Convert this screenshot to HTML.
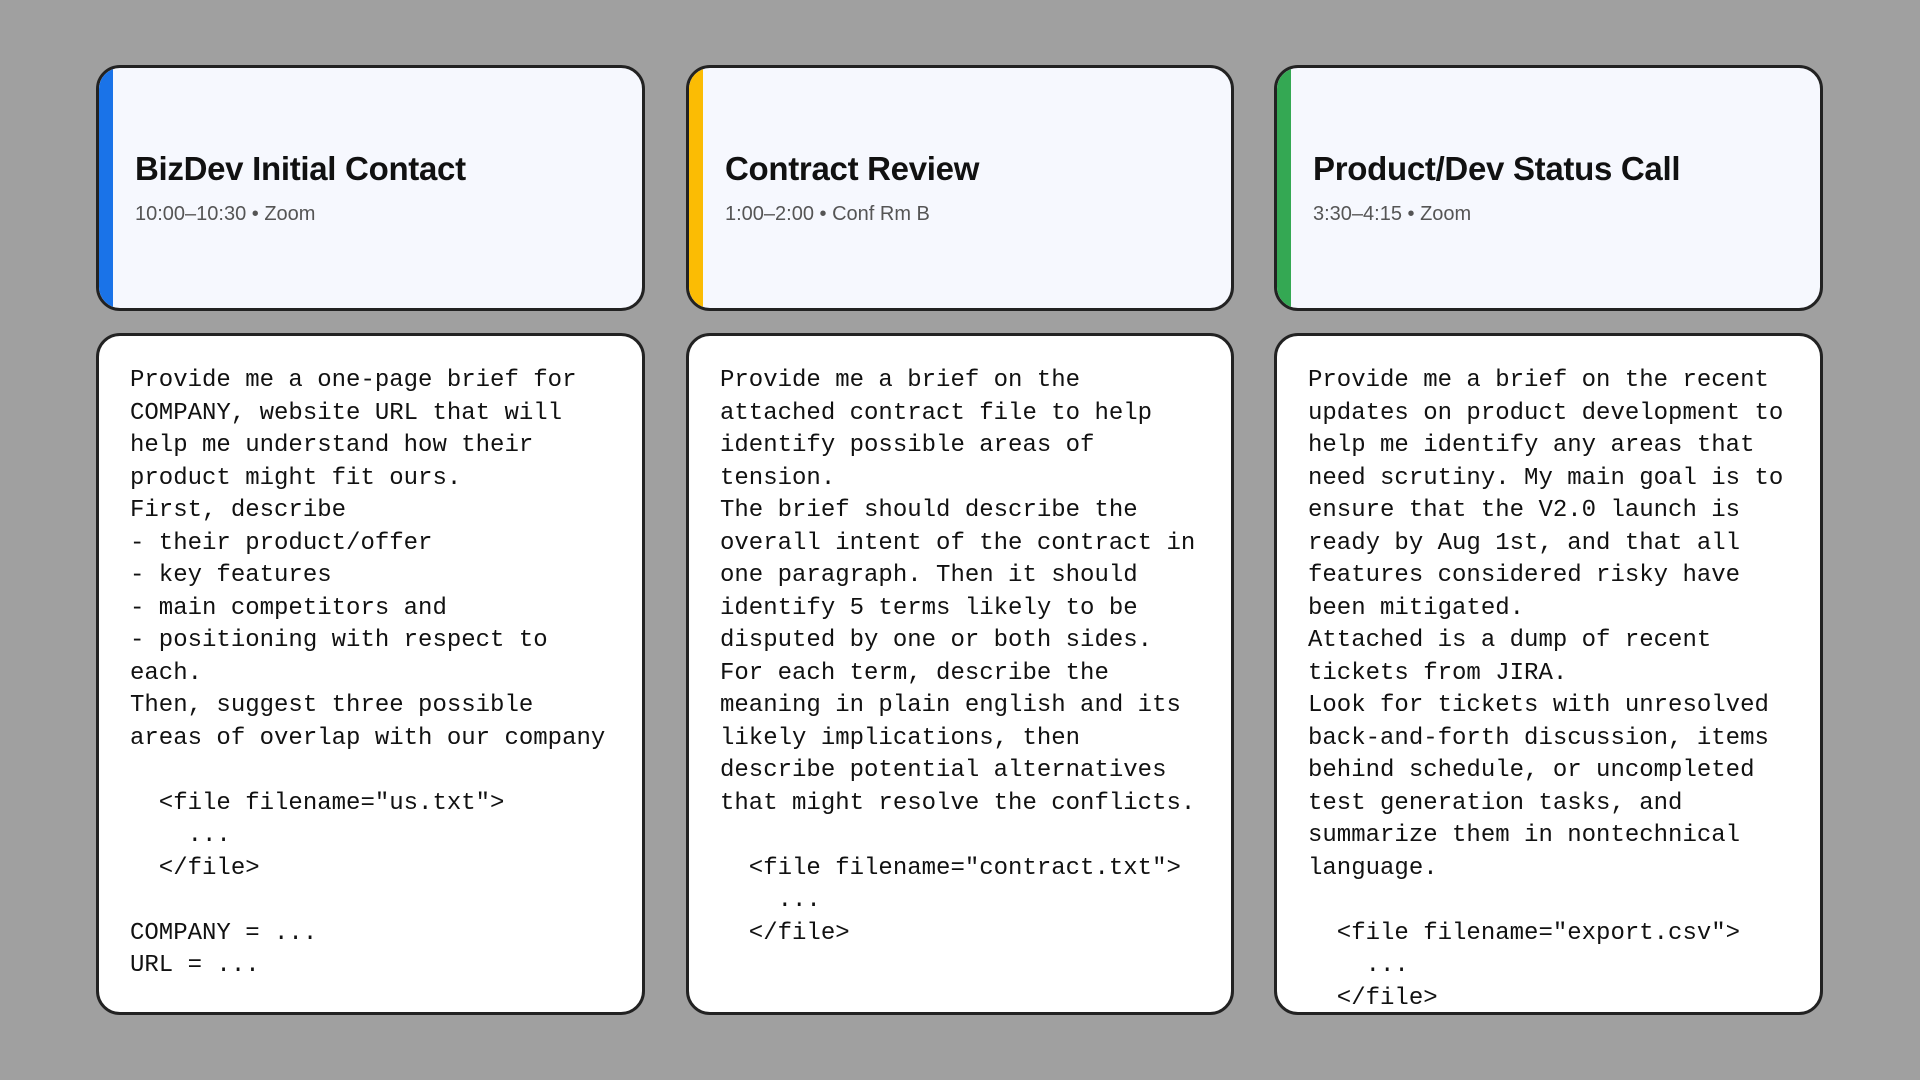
<!DOCTYPE html>
<html><head><meta charset="utf-8"><style>
html,body{margin:0;padding:0;width:1920px;height:1080px;background:#a0a0a0;overflow:hidden}
.col{position:absolute;top:65px;width:549px}
.head{position:relative;box-sizing:border-box;height:246px;border:3px solid #222;border-radius:24px;background:#f6f8fe;overflow:hidden}
.bar{position:absolute;left:0;top:0;bottom:0;width:14px}
.title{position:absolute;left:36px;top:82px;font:bold 33px "Liberation Sans",sans-serif;letter-spacing:-0.3px;color:#111}
.meta{position:absolute;left:36px;top:135px;font:20px "Liberation Sans",sans-serif;color:#555}
.body{position:absolute;top:268px;left:0;box-sizing:border-box;width:549px;height:682px;border:3px solid #222;border-radius:24px;background:#fff;overflow:hidden}
pre{margin:0;position:absolute;left:31px;top:29px;font:24px/32.5px "Liberation Mono",monospace;color:#111}
</style></head><body>
<div class="col" style="left:96px">
<div class="head"><div class="bar" style="background:#1a73e8"></div><div class="title">BizDev Initial Contact</div><div class="meta">10:00–10:30 • Zoom</div></div>
<div class="body"><pre>Provide me a one-page brief for
COMPANY, website URL that will
help me understand how their
product might fit ours.
First, describe
- their product/offer
- key features
- main competitors and
- positioning with respect to
each.
Then, suggest three possible
areas of overlap with our company

  &lt;file filename="us.txt"&gt;
    ...
  &lt;/file&gt;

COMPANY = ...
URL = ...</pre></div>
</div>
<div class="col" style="left:686px;width:548px">
<div class="head"><div class="bar" style="background:#fbbc04"></div><div class="title">Contract Review</div><div class="meta">1:00–2:00 • Conf Rm B</div></div>
<div class="body" style="width:548px"><pre>Provide me a brief on the
attached contract file to help
identify possible areas of
tension.
The brief should describe the
overall intent of the contract in
one paragraph. Then it should
identify 5 terms likely to be
disputed by one or both sides.
For each term, describe the
meaning in plain english and its
likely implications, then
describe potential alternatives
that might resolve the conflicts.

  &lt;file filename="contract.txt"&gt;
    ...
  &lt;/file&gt;</pre></div>
</div>
<div class="col" style="left:1274px">
<div class="head"><div class="bar" style="background:#34a853"></div><div class="title">Product/Dev Status Call</div><div class="meta">3:30–4:15 • Zoom</div></div>
<div class="body"><pre>Provide me a brief on the recent
updates on product development to
help me identify any areas that
need scrutiny. My main goal is to
ensure that the V2.0 launch is
ready by Aug 1st, and that all
features considered risky have
been mitigated.
Attached is a dump of recent
tickets from JIRA.
Look for tickets with unresolved
back-and-forth discussion, items
behind schedule, or uncompleted
test generation tasks, and
summarize them in nontechnical
language.

  &lt;file filename="export.csv"&gt;
    ...
  &lt;/file&gt;</pre></div>
</div>
</body></html>
